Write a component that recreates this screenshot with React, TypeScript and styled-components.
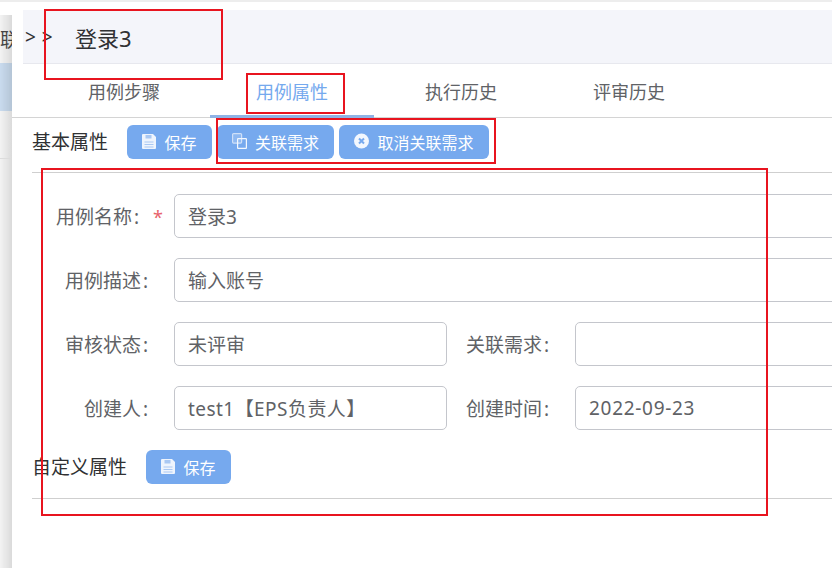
import styled, { createGlobalStyle } from "styled-components";

const GlobalStyle = createGlobalStyle`
  html, body {
    margin: 0;
    padding: 0;
    width: 832px;
    height: 568px;
    overflow: hidden;
    background: #fff;
  }
  * {
    box-sizing: border-box;
  }
`;

const Page = styled.div`
  position: relative;
  display: flex;
  width: 832px;
  height: 568px;
  overflow: hidden;
  border-top: 2px solid #ededed;
  font-family: "Noto Sans", "Noto Sans CJK SC", sans-serif;
  font-size: 19px;
  color: #303133;
`;

const BackList = styled.div`
  flex: none;
  display: flex;
  flex-direction: column;
  width: 12px;
  padding-top: 13px;
  overflow: hidden;
`;

const BackRow = styled.div<{ $tone?: string; $fill?: boolean; $line?: boolean }>`
  flex: ${(p) => (p.$fill ? "1" : "none")};
  width: 12px;
  height: 48px;
  overflow: hidden;
  white-space: nowrap;
  font-size: 19px;
  line-height: 50px;
  color: #444;
  background: linear-gradient(90deg, rgba(0, 0, 0, 0), rgba(0, 0, 0, 0.1)),
    ${(p) => p.$tone || "#f3f3f3"};
  border-bottom: 1px solid ${(p) => (p.$line ? "#dcdcdc" : "transparent")};
`;

const Panel = styled.div`
  flex: 1;
  min-width: 0;
  padding-top: 8px;
  background: #fff;
`;

const Header = styled.div`
  display: flex;
  align-items: center;
  height: 54px;
  margin-left: 11px;
  padding-left: 2px;
  background: #f4f5fa;
  border-bottom: 1px solid #e7e8ee;
`;

const Arrows = styled.span`
  width: 50px;
  font-size: 19px;
  letter-spacing: 6px;
  color: #303133;
`;

const Title = styled.span`
  font-size: 22px;
  color: #303133;
`;

const Tabs = styled.div`
  display: flex;
  height: 54px;
  padding-left: 28px;
  border-bottom: 1px solid #d4d4d4;
`;

const Tab = styled.div<{ $active?: boolean }>`
  flex: none;
  width: ${(p) => (p.$active ? 164 : 168)}px;
  height: 54px;
  margin: ${(p) => (p.$active ? "0 3px 0 2px" : "0")};
  padding-top: 10px;
  text-align: center;
  font-size: 18px;
  line-height: 36px;
  color: ${(p) => (p.$active ? "#75a9ee" : "#606266")};
  border-bottom: 3px solid ${(p) => (p.$active ? "#8fb3e6" : "transparent")};
`;

const Bar = styled.div<{ $gap: number; $height: number }>`
  display: flex;
  align-items: flex-start;
  height: ${(p) => p.$height}px;
  margin-left: 20px;
  padding-top: 7px;
  gap: ${(p) => p.$gap}px;
  border-bottom: 1px solid #cfcfcf;
`;

const BarTitle = styled.span<{ $width: number }>`
  width: ${(p) => p.$width}px;
  font-size: 19px;
  line-height: 34px;
  color: #303133;
  white-space: nowrap;
`;

const Action = styled.button<{ $width: number }>`
  display: flex;
  align-items: center;
  justify-content: center;
  gap: 8px;
  width: ${(p) => p.$width}px;
  height: 34px;
  padding: 0;
  border: none;
  border-radius: 6px;
  background: #76a9ee;
  color: #fff;
  font-family: inherit;
  font-size: 16px;

  svg {
    margin-top: -2px;
  }
`;

const Form = styled.div`
  display: flex;
  flex-direction: column;
  gap: 20px;
  padding: 21px 0 13px 0;
`;

const Row = styled.div`
  display: flex;
  align-items: center;
`;

const Label = styled.label<{ $width: number }>`
  flex: none;
  width: ${(p) => p.$width}px;
  padding-right: 24px;
  text-align: right;
  white-space: nowrap;
  font-size: 19px;
  color: #606266;
`;

const Colon = styled.span`
  display: inline-block;
  width: 9px;
  text-align: center;
`;

const Star = styled.span`
  display: inline-block;
  width: 9px;
  margin: 0 -12px 0 12px;
  text-align: left;
  font-size: 18px;
  color: #e8636b;
`;

const Field = styled.div<{ $width?: number; $spacing?: number }>`
  flex: none;
  display: flex;
  align-items: center;
  width: ${(p) => (p.$width ? `${p.$width}px` : "700px")};
  height: 44px;
  padding-left: 13px;
  border: 1px solid #c4c6cc;
  border-radius: 5px;
  font-size: 19px;
  letter-spacing: ${(p) => p.$spacing || 0}px;
  color: #606266;
  white-space: nowrap;
`;

const Mark = styled.div<{ $x: number; $y: number; $w: number; $h: number }>`
  position: absolute;
  left: ${(p) => p.$x}px;
  top: ${(p) => p.$y}px;
  width: ${(p) => p.$w}px;
  height: ${(p) => p.$h}px;
  border: 2px solid #e8141f;
  pointer-events: none;
`;

const SaveIcon = () => (
  <svg width="14" height="15" viewBox="0 0 14 15">
    <path d="M1 0h10l3 3v11a1 1 0 0 1-1 1H1a1 1 0 0 1-1-1V1a1 1 0 0 1 1-1z" fill="#eef4fd" />
    <path d="M3.500 1h6v3.500h-6z" fill="#a9c8f3" />
    <path d="M2.500 7.500h9v1h-9zM2.500 10h9v1h-9zM2.500 12.500h9v1h-9z" fill="#a9c8f3" />
  </svg>
);

const LinkIcon = () => (
  <svg width="15" height="16" viewBox="0 0 15 16" fill="none">
    <rect x="0.600" y="0.600" width="9" height="9.500" rx="1" stroke="#cfe0f8" strokeWidth="1.200" fill="rgba(255,255,255,0.18)" />
    <rect x="5.600" y="5.600" width="8.800" height="9.800" rx="0.500" stroke="#f2f7fe" strokeWidth="1.200" />
  </svg>
);

const CancelIcon = () => (
  <svg width="15" height="16" viewBox="0 0 15 16">
    <circle cx="7.500" cy="8" r="7.500" fill="#f2f7fe" />
    <path d="M5 5.500l5 5M10 5.500l-5 5" stroke="#76a9ee" strokeWidth="2" />
  </svg>
);

export default function App() {
  return (
    <Page>
      <GlobalStyle />
      <BackList>
        <BackRow>联</BackRow>
        <BackRow $tone="#c9dbee" />
        <BackRow $line />
        <BackRow $fill />
      </BackList>
      <Panel>
        <Header>
          <Arrows>{">>"}</Arrows>
          <Title>登录3</Title>
        </Header>
        <Tabs>
          <Tab>用例步骤</Tab>
          <Tab $active>用例属性</Tab>
          <Tab>执行历史</Tab>
          <Tab>评审历史</Tab>
        </Tabs>
        <Bar $gap={5} $height={55}>
          <BarTitle $width={90}>基本属性</BarTitle>
          <Action $width={85}>
            <SaveIcon />
            保存
          </Action>
          <Action $width={117}>
            <LinkIcon />
            关联需求
          </Action>
          <Action $width={150}>
            <CancelIcon />
            取消关联需求
          </Action>
        </Bar>
        <Form>
          <Row>
            <Label $width={162}>
              用例名称<Colon>:</Colon>
              <Star>*</Star>
            </Label>
            <Field>登录3</Field>
          </Row>
          <Row>
            <Label $width={162}>
              用例描述<Colon>:</Colon>
            </Label>
            <Field>输入账号</Field>
          </Row>
          <Row>
            <Label $width={162}>
              审核状态<Colon>:</Colon>
            </Label>
            <Field $width={273}>未评审</Field>
            <Label $width={128}>
              关联需求<Colon>:</Colon>
            </Label>
            <Field />
          </Row>
          <Row>
            <Label $width={162}>
              创建人<Colon>:</Colon>
            </Label>
            <Field $width={273} $spacing={0.45}>
              test1【EPS负责人】
            </Field>
            <Label $width={128}>
              创建时间<Colon>:</Colon>
            </Label>
            <Field $spacing={0.7}>2022-09-23</Field>
          </Row>
        </Form>
        <Bar $gap={19} $height={56}>
          <BarTitle $width={95}>自定义属性</BarTitle>
          <Action $width={85}>
            <SaveIcon />
            保存
          </Action>
        </Bar>
      </Panel>
      <Mark $x={44} $y={7} $w={179} $h={71} />
      <Mark $x={246} $y={71} $w={99} $h={41} />
      <Mark $x={216} $y={116} $w={280} $h={46} />
      <Mark $x={41} $y={166} $w={727} $h={348} />
    </Page>
  );
}
